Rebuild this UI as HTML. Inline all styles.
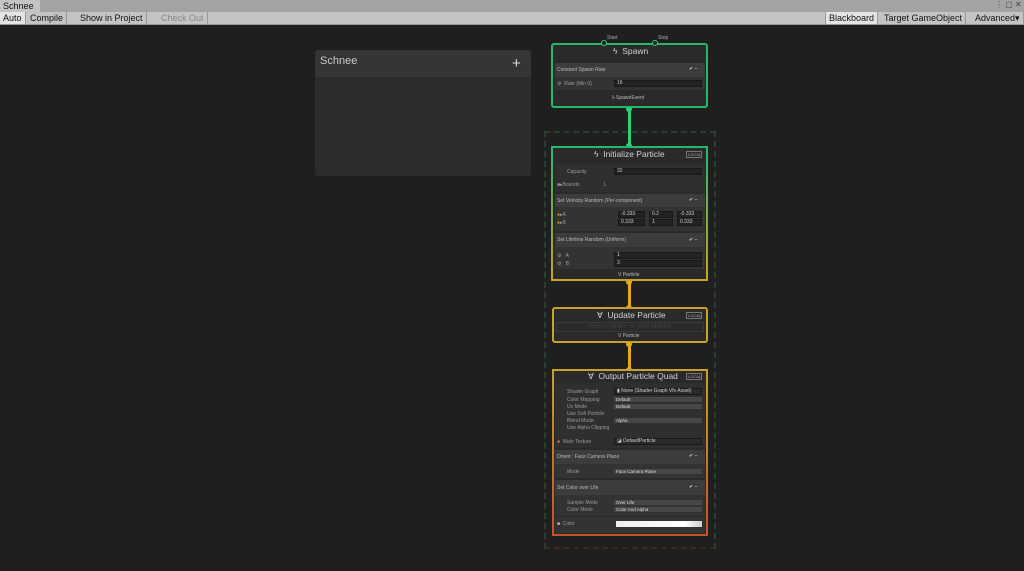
<!DOCTYPE html>
<html><head><meta charset="utf-8"><style>
*{margin:0;padding:0;box-sizing:border-box}
body{width:1024px;height:571px;background:#1f1f1f;position:relative;overflow:hidden;font-family:"Liberation Sans",sans-serif;color:#c4c4c4}
.a{position:absolute}
.t{position:absolute;font-size:5px;white-space:nowrap;color:#9a9a9a;line-height:6px}
.f{position:absolute;background:#222;border:1px solid #181818;height:7px;font-size:5px;color:#ccc;line-height:5px;padding-left:2px}
.d{position:absolute;background:#474747;height:5px;font-size:4.5px;color:#ddd;line-height:5px;padding-left:2px}
.bh{position:absolute;background:#3c3c3c;left:555px;width:150px}
.bc{position:absolute;background:#333;left:555px;width:150px}
.node{position:absolute;background:#2a2a2a;border-radius:3px}
.ht{position:absolute;font-size:8.5px;color:#d0d0d0;white-space:nowrap}
.tb{position:absolute;top:12px;height:12px;font-size:9px;line-height:12px;color:#111;padding:0 3px;border-right:1px solid #999}
.bdg{position:absolute;font-size:4px;line-height:5px;color:#aaa;border:1px solid #777;padding:0 1px;width:16px;overflow:hidden}
</style></head><body>
<div class="a" style="left:0;top:0;width:1024px;height:12px;background:#a3a3a3"></div>
<div class="a" style="left:0;top:0;width:40px;height:12px;background:#c4c4c4;font-size:9px;line-height:12px;padding-left:3px;color:#111">Schnee</div>
<div class="a" style="left:995px;top:0;font-size:8px;color:#444">⋮ ▢ ✕</div>
<div class="a" style="left:0;top:12px;width:1024px;height:13px;background:#c4c4c4;border-bottom:1px solid #999"></div>
<div class="tb" style="left:0;background:#e4e4e4">Auto</div>
<div class="tb" style="left:27px">Compile</div>
<div class="tb" style="left:77px">Show in Project</div>
<div class="tb" style="left:158px;color:#888">Check Out</div>
<div class="tb" style="left:825px;background:#e4e4e4;border-left:1px solid #999">Blackboard</div>
<div class="tb" style="left:881px">Target GameObject</div>
<div class="tb" style="left:972px">Advanced▾</div>

<div class="a" style="left:315px;top:50px;width:216px;height:126px;background:#2c2c2c;border-radius:3px"></div>
<div class="a" style="left:315px;top:50px;width:216px;height:27px;background:#353535;border-radius:3px 3px 0 0"></div>
<div class="a" style="left:320px;top:55px;font-size:11px;color:#c8c8c8">Schnee</div>
<div class="a" style="left:512px;top:55px;font-size:15px;color:#ddd">+</div>

<div class="a" style="left:544px;top:131px;width:172px;height:418px;border:2px dashed #26402e;border-bottom-color:#40281f"></div>

<div class="a" style="left:628px;top:108px;width:3px;height:38px;background:#2fd07a"></div>
<div class="a" style="left:628px;top:281px;width:3px;height:26px;background:#e6a91e"></div>
<div class="a" style="left:628px;top:343px;width:3px;height:26px;background:#e6a91e"></div>
<div class="a" style="left:626px;top:106px;width:6px;height:6px;border-radius:3px;background:#2fd07a"></div>
<div class="a" style="left:626px;top:143px;width:6px;height:6px;border-radius:3px;background:#2fd07a"></div>
<div class="a" style="left:626px;top:279px;width:6px;height:6px;border-radius:3px;background:#e6a91e"></div>
<div class="a" style="left:626px;top:305px;width:6px;height:6px;border-radius:3px;background:#e6a91e"></div>
<div class="a" style="left:626px;top:341px;width:6px;height:6px;border-radius:3px;background:#e6a91e"></div>
<div class="a" style="left:626px;top:367px;width:6px;height:6px;border-radius:3px;background:#e6a91e"></div>

<div class="node" style="left:551px;top:43px;width:157px;height:65px;border:2px solid #25b86a"></div>
<div class="a" style="left:601px;top:40px;width:6px;height:6px;border-radius:3px;border:1px solid #2fd07a;background:#1f1f1f"></div>
<div class="a" style="left:652px;top:40px;width:6px;height:6px;border-radius:3px;border:1px solid #2fd07a;background:#1f1f1f"></div>
<div class="t" style="left:607px;top:35px;color:#aaa">Start</div>
<div class="t" style="left:658px;top:35px;color:#aaa">Stop</div>
<div class="ht" style="left:613px;top:46px">ϟ &nbsp;Spawn</div>
<div class="bh" style="top:63px;height:14px"></div>
<div class="bc" style="top:77px;height:13px"></div>
<div class="t" style="left:557px;top:67px;color:#bbb">Constant Spawn Rate</div>
<div class="t" style="left:689px;top:66px;color:#ddd">✔ –</div>
<div class="t" style="left:557px;top:81px">⚙ &nbsp;Rate (Min 0)</div>
<div class="f" style="left:614px;top:80px;width:88px">16</div>
<div class="t" style="left:612px;top:95px;color:#bbb">ϟ SpawnEvent</div>

<div class="node" style="left:551px;top:146px;width:157px;height:135px;border:2px solid #25b86a;border-image:linear-gradient(#25b86a,#c9a227) 1"></div>
<div class="ht" style="left:594px;top:149px">ϟ &nbsp;Initialize Particle</div>
<div class="bdg" style="left:686px;top:151px">LOCAL</div>
<div class="bc" style="top:164px;height:28px;background:#2f2f2f"></div>
<div class="t" style="left:567px;top:169px">Capacity</div>
<div class="f" style="left:614px;top:168px;width:88px">32</div>
<div class="t" style="left:557px;top:182px">■▸Bounds</div>
<div class="t" style="left:604px;top:182px">L</div>
<div class="bh" style="top:194px;height:13px"></div>
<div class="bc" style="top:207px;height:24px"></div>
<div class="t" style="left:557px;top:198px;color:#bbb">Set Velocity Random (Per-component)</div>
<div class="t" style="left:689px;top:197px;color:#ddd">✔ –</div>
<div class="t" style="left:557px;top:212px"><span style="color:#c9a227">●</span>▸A</div>
<div class="t" style="left:557px;top:220px"><span style="color:#c9a227">●</span>▸B</div>
<div class="f" style="left:618px;top:211px;width:27px">-0.333</div><div class="f" style="left:649px;top:211px;width:24px">0.2</div><div class="f" style="left:677px;top:211px;width:25px">-0.333</div>
<div class="f" style="left:618px;top:219px;width:27px">0.333</div><div class="f" style="left:649px;top:219px;width:24px">1</div><div class="f" style="left:677px;top:219px;width:25px">0.333</div>
<div class="bh" style="top:233px;height:14px"></div>
<div class="bc" style="top:247px;height:22px"></div>
<div class="t" style="left:557px;top:237px;color:#bbb">Set Lifetime Random (Uniform)</div>
<div class="t" style="left:689px;top:237px;color:#ddd">✔ –</div>
<div class="t" style="left:557px;top:253px">⚙ &nbsp;&nbsp;A</div>
<div class="t" style="left:557px;top:261px">⚙ &nbsp;&nbsp;B</div>
<div class="f" style="left:614px;top:252px;width:88px">1</div>
<div class="f" style="left:614px;top:260px;width:88px">3</div>
<div class="t" style="left:618px;top:272px;color:#bbb">V Particle</div>

<div class="node" style="left:552px;top:307px;width:156px;height:36px;border:2px solid #c9a227"></div>
<div class="ht" style="left:597px;top:310px">∀ &nbsp;Update Particle</div>
<div class="bdg" style="left:686px;top:312px">LOCAL</div>
<div class="a" style="left:556px;top:322px;width:148px;height:10px;border:1px solid #3a3a3a;font-size:7px;color:#3e3e3e;text-align:center;line-height:8px">Press space to add blocks</div>
<div class="t" style="left:618px;top:333px;color:#bbb">V Particle</div>

<div class="node" style="left:552px;top:369px;width:156px;height:167px;border:2px solid #c9a227;border-image:linear-gradient(#c9a227,#c8502a) 1"></div>
<div class="ht" style="left:588px;top:371px">∀ &nbsp;Output Particle Quad</div>
<div class="bdg" style="left:686px;top:373px">LOCAL</div>
<div class="bc" style="top:383px;height:65px;background:#2f2f2f"></div>
<div class="t" style="left:567px;top:389px">Shader Graph</div>
<div class="f" style="left:614px;top:388px;width:88px;background:#2a2a2a">▮ None (Shader Graph Vfx Asset)</div>
<div class="t" style="left:567px;top:397px">Color Mapping</div><div class="d" style="left:614px;top:397px;width:88px">Default</div>
<div class="t" style="left:567px;top:404px">Uv Mode</div><div class="d" style="left:614px;top:404px;width:88px">Default</div>
<div class="t" style="left:567px;top:411px">Use Soft Particle</div>
<div class="t" style="left:567px;top:418px">Blend Mode</div><div class="d" style="left:614px;top:418px;width:88px">Alpha</div>
<div class="t" style="left:567px;top:425px">Use Alpha Clipping</div>
<div class="t" style="left:557px;top:439px"><span style="color:#d55">■</span> &nbsp;Main Texture</div>
<div class="f" style="left:614px;top:438px;width:88px;background:#2a2a2a">◪ DefaultParticle</div>
<div class="bh" style="top:450px;height:14px"></div>
<div class="bc" style="top:464px;height:14px"></div>
<div class="t" style="left:557px;top:454px;color:#bbb">Orient : Face Camera Plane</div>
<div class="t" style="left:689px;top:453px;color:#ddd">✔ –</div>
<div class="t" style="left:567px;top:469px">Mode</div><div class="d" style="left:614px;top:469px;width:88px">Face Camera Plane</div>
<div class="bh" style="top:480px;height:15px"></div>
<div class="bc" style="top:495px;height:38px"></div>
<div class="t" style="left:557px;top:485px;color:#bbb">Set Color over Life</div>
<div class="t" style="left:689px;top:484px;color:#ddd">✔ –</div>
<div class="t" style="left:567px;top:500px">Sample Mode</div><div class="d" style="left:614px;top:500px;width:88px">Over Life</div>
<div class="t" style="left:567px;top:507px">Color Mode</div><div class="d" style="left:614px;top:507px;width:88px">Color And Alpha</div>
<div class="a" style="left:555px;top:516px;width:150px;height:1px;background:#2a2a2a"></div>
<div class="t" style="left:557px;top:521px"><span style="color:#e9a">■</span> &nbsp;Color</div>
<div class="a" style="left:616px;top:521px;width:86px;height:6px;background:linear-gradient(90deg,#eee,#fff 80%,#ccc)"></div>
</body></html>
